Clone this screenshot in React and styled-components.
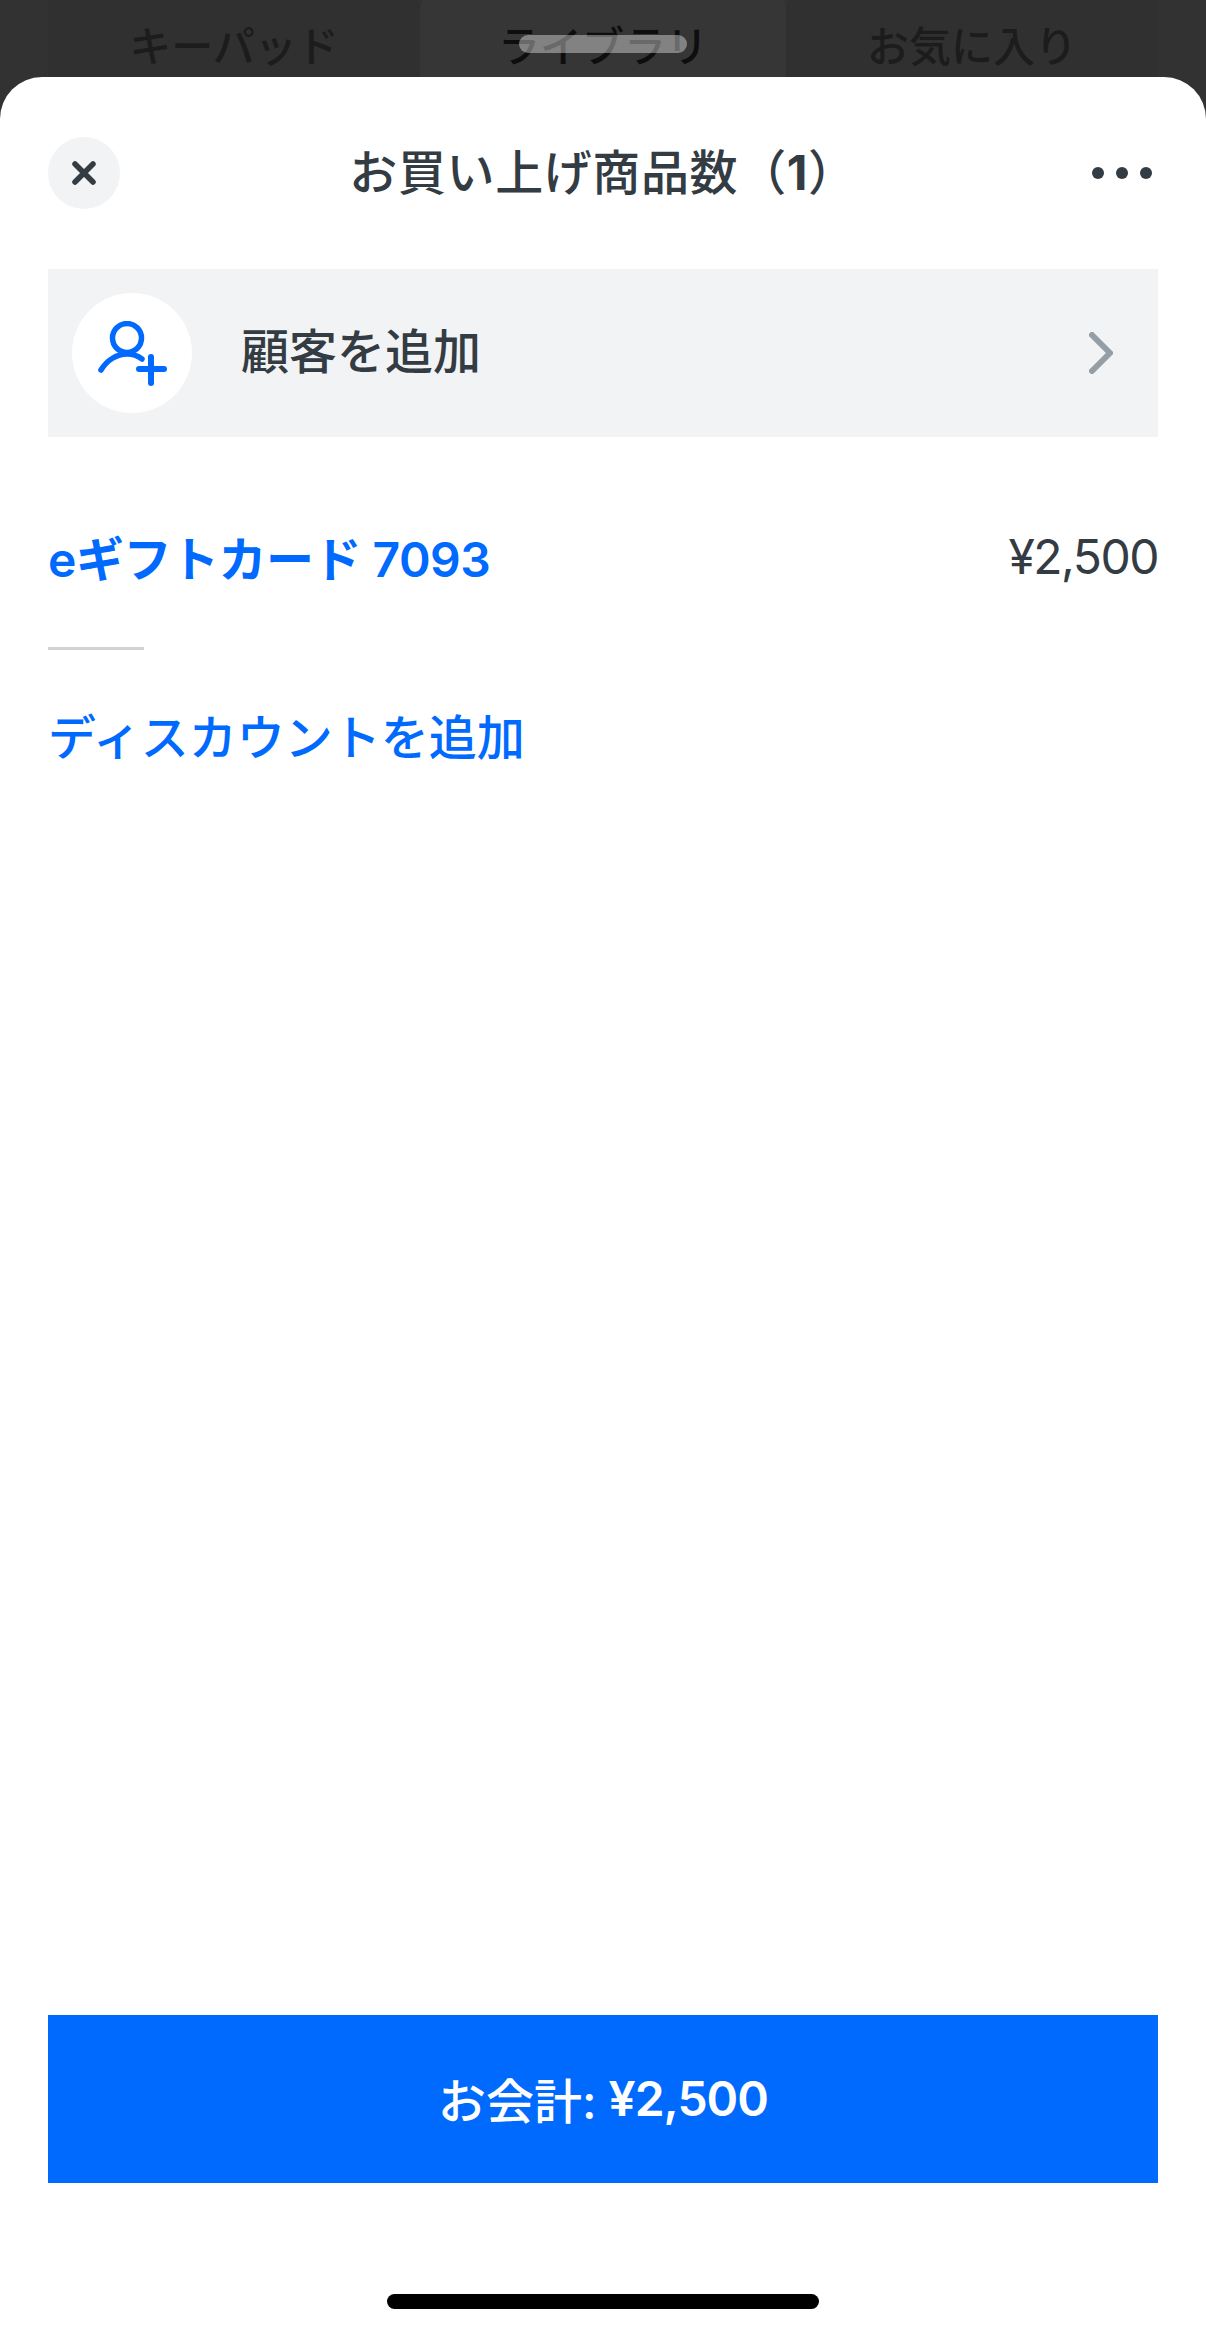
import React from "react";
import styled, { createGlobalStyle } from "styled-components";

const FONT = `Inter, "Noto Sans CJK JP", sans-serif`;
const BLUE = "#006aff";
const INK = "#333b43";

const Global = createGlobalStyle`
  html, body { margin: 0; padding: 0; background: #323232; }
  body { width: 1206px; height: 2333px; overflow: hidden; font-family: ${FONT}; }
`;

const Screen = styled.div`
  position: relative;
  width: 1206px;
  height: 2333px;
  background: #323232;
  display: flex;
  flex-direction: column;
  overflow: hidden;
`;

const Backdrop = styled.div`
  height: 77px;
  padding: 0 48px;
  display: grid;
  grid-template-columns: 372px 366px 372px;
`;

const BackTab = styled.div`
  height: 96px;
  margin-top: -8px;
  border-radius: 18px 18px 0 0;
  display: flex;
  align-items: flex-start;
  justify-content: center;
  padding-top: 30px;
  background: ${(p) => (p.$active ? "#363636" : "#303030")};
  font-size: 42px;
  line-height: 50px;
  font-weight: 500;
  color: ${(p) => (p.$active ? "#0e0e0e" : "#1c1c1c")};
`;

const StatusPill = styled.div`
  position: absolute;
  top: 35px;
  left: 519px;
  width: 168px;
  height: 18px;
  border-radius: 9px;
  background: rgba(255, 255, 255, 0.38);
`;

const Sheet = styled.main`
  position: relative;
  flex: 1;
  background: #fff;
  border-radius: 42px 42px 0 0;
  display: flex;
  flex-direction: column;
  padding: 60px 48px 24px;
`;

const Header = styled.header`
  height: 72px;
  display: grid;
  grid-template-columns: 72px 1fr 72px;
  align-items: center;
`;

const CloseButton = styled.div`
  width: 72px;
  height: 72px;
  border-radius: 50%;
  background: #f2f3f5;
  display: flex;
  align-items: center;
  justify-content: center;
`;

const Title = styled.h1`
  margin: 0;
  text-align: center;
  font-size: 48px;
  line-height: 72px;
  font-weight: 500;
  letter-spacing: 0.6px;
  color: ${INK};
`;

const TitleCount = styled.span`
  font-weight: 700;
`;

const MoreDots = styled.div`
  display: flex;
  justify-content: flex-end;
  gap: 12px;
  padding-right: 6px;
`;

const Dot = styled.span`
  width: 12px;
  height: 12px;
  border-radius: 50%;
  background: ${INK};
`;

const CustomerRow = styled.div`
  margin-top: 60px;
  height: 168px;
  background: #f2f3f5;
  display: flex;
  align-items: center;
  padding: 0 45px 0 24px;
`;

const Avatar = styled.div`
  width: 120px;
  height: 120px;
  border-radius: 50%;
  background: #fff;
  display: flex;
  align-items: center;
  justify-content: center;
`;

const RowLabel = styled.span`
  margin: 0 0 2px 49px;
  flex: 1;
  font-size: 48px;
  line-height: 60px;
  font-weight: 500;
  color: ${INK};
`;

const ItemRow = styled.div`
  margin-top: 92px;
  display: flex;
  justify-content: space-between;
  align-items: center;
  height: 54px;
`;

const ItemName = styled.span`
  font-size: 48px;
  font-weight: 600;
  letter-spacing: -0.5px;
  color: ${BLUE};
`;

const Price = styled.span`
  font-size: 48px;
  font-weight: 400;
  letter-spacing: -1.5px;
  color: ${INK};
`;

const Rule = styled.hr`
  margin: 64px 0 0;
  border: 0;
  width: 96px;
  height: 3px;
  background: #d3d3d3;
`;

const LinkText = styled.div`
  margin-top: 61px;
  font-size: 48px;
  line-height: 54px;
  font-weight: 500;
  color: ${BLUE};
`;

const Spacer = styled.div`
  flex: 1;
`;

const PayButton = styled.div`
  height: 168px;
  padding-bottom: 2px;
  box-sizing: border-box;
  background: ${BLUE};
  color: #fff;
  display: flex;
  align-items: center;
  justify-content: center;
  font-size: 48px;
  font-weight: 500;
`;

const PayAmount = styled.span`
  margin-left: 0.25em;
  font-weight: 600;
  letter-spacing: -1px;
`;

const HomeBar = styled.div`
  align-self: center;
  margin-top: 111px;
  width: 432px;
  height: 15px;
  border-radius: 8px;
  background: #000;
`;

export default function App() {
  return (
    <Screen>
      <Global />
      <Backdrop>
        <BackTab>キーパッド</BackTab>
        <BackTab $active>ライブラリ</BackTab>
        <BackTab>お気に入り</BackTab>
      </Backdrop>
      <StatusPill />
      <Sheet>
        <Header>
          <CloseButton>
            <svg width="24" height="24" viewBox="0 0 24 24" fill="none" stroke={INK} strokeWidth="5.5" strokeLinecap="round">
              <path d="M3 3 21 21M21 3 3 21" />
            </svg>
          </CloseButton>
          <Title>お買い上げ商品数（<TitleCount>1</TitleCount>）</Title>
          <MoreDots>
            <Dot />
            <Dot />
            <Dot />
          </MoreDots>
        </Header>
        <CustomerRow>
          <Avatar>
            <svg width="69" height="65" viewBox="0 0 69 65" fill="none" stroke={BLUE} strokeWidth="5.5" strokeLinecap="round">
              <circle cx="29" cy="17" r="14.5" />
              <path d="M3 49C9 39 19 33 29 33 35 33 40 35 44 38" />
              <path d="M41 48H66M53 36V62" strokeWidth="6" />
            </svg>
          </Avatar>
          <RowLabel>顧客を追加</RowLabel>
          <svg width="24" height="42" viewBox="0 0 24 42" fill="none" stroke="#969ea5" strokeWidth="6" strokeLinecap="round" strokeLinejoin="round">
            <path d="M3 3 21 21 3 39" />
          </svg>
        </CustomerRow>
        <ItemRow>
          <ItemName>eギフトカード 7093</ItemName>
          <Price>¥2,500</Price>
        </ItemRow>
        <Rule />
        <LinkText>ディスカウントを追加</LinkText>
        <Spacer />
        <PayButton>お会計:<PayAmount>¥2,500</PayAmount></PayButton>
        <HomeBar />
      </Sheet>
    </Screen>
  );
}
